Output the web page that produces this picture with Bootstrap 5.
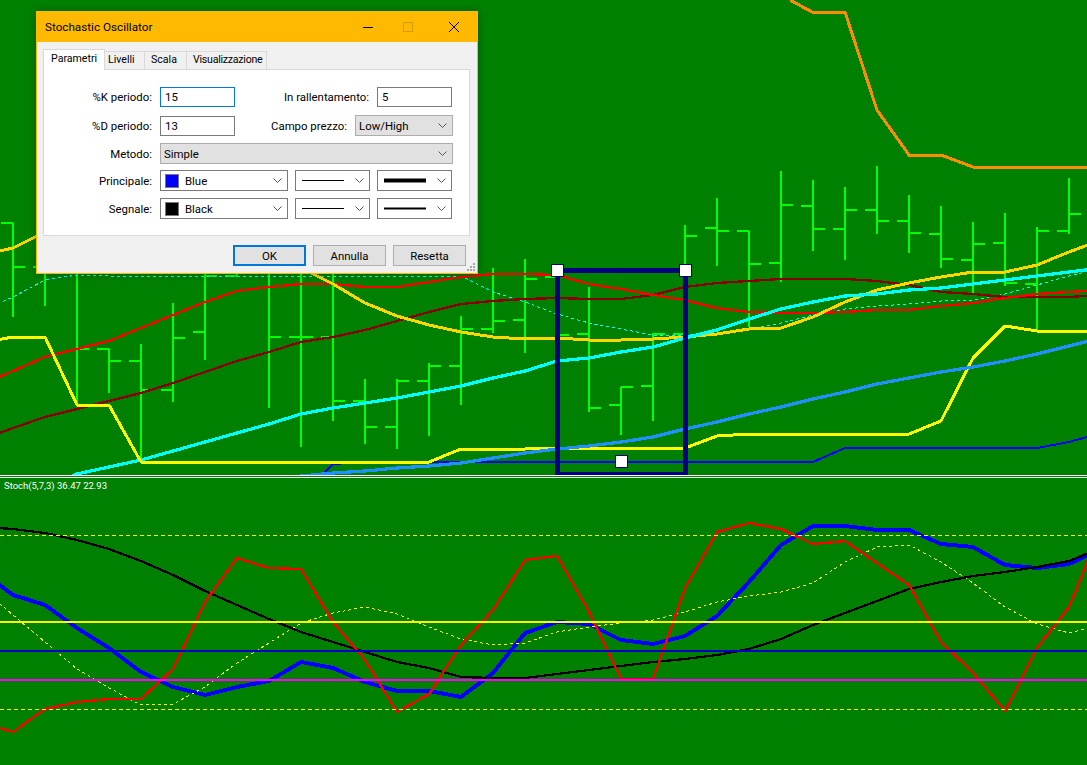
<!DOCTYPE html>
<html lang="en">
<head>
    <meta charset="UTF-8">
    <meta name="viewport" content="width=device-width, initial-scale=1">
    <title>Stochastic Oscillator</title>
    <link href="https://cdn.jsdelivr.net/npm/bootstrap@5.3.0/dist/css/bootstrap.min.css" rel="stylesheet">
    <style>
        body { background: #008000; overflow: hidden; font-family: Roboto, "Liberation Sans", sans-serif; }

        /* Chart windows */
        .chart-page { width: 1087px; height: 765px; }
        .chart-svg { display: block; background: #008000; }
        .chart-sep { height: 3px; background: #008000; border-top: 1px solid #fff; border-bottom: 1px solid #fff; }
        .sub-window { height: 287px; }
        .sub-label { left: 4px; top: 2px; color: #fff; font: 9.5px/12px Roboto, sans-serif; }

        /* Dialog */
        .dlg { left: 36px; top: 11px; width: 442px; height: 263px; background: #f0f0f0; border: 1px solid #ffb900; box-shadow: 0 0 8px rgba(0, 0, 0, .3); font-size: 11.4px; line-height: 16px; color: #000; }
        .dlg-title { height: 30px; background: #ffb900; padding-left: 8px; font-size: 11.7px; }
        .dlg-btns svg { display: block; }
        .win-min { margin-right: 30px; }
        .win-max { margin-right: 36px; }
        .win-close { margin-right: 18px; }
        .dlg-body { padding: 7px 7px 0 6px; }

        .dlg-tabs { height: 20px; flex-wrap: nowrap; font-size: 10.6px; }
        .dlg-tab { height: 18px; margin-top: 2px; padding-left: 6px; background: #f0f0f0; border: 1px solid #d9d9d9; border-bottom: 0; border-left: 0; color: #000; white-space: nowrap; }
        .dlg-tab-on { width: 62px; height: 21px; margin-top: 0; padding: 1px 0 0 7px; background: #fff; border-left: 1px solid #d9d9d9; position: relative; z-index: 2; }
        .tab-liv { width: 40px; padding-left: 3px; }
        .tab-sca { width: 42px; }
        .tab-vis { width: 80px; letter-spacing: -.25px; }
        .dlg-pane { height: 167px; width: 427px; background: #fff; border: 1px solid #d9d9d9; padding: 17px 0 0 0; }

        .fld-label { width: 108px; margin-right: 8px; text-align: right; }
        .fld-label-a { width: 134px; margin-right: 8px; text-align: right; }
        .fld-label-b { width: 112px; margin-right: 8px; text-align: right; }
        .fld { width: 75px; height: 20px; border: 1px solid #7a7a7a; border-radius: 0; padding: 0 0 0 4px; font-size: 11.4px; line-height: 16px; color: #000; background: #fff; min-height: 0; }
        .fld:focus { box-shadow: none; border-color: #7a7a7a; }
        .fld-on, .fld-on:focus { border-color: #0078d7; }

        .combo { height: 21px; border: 1px solid #7a7a7a; background: #fff; padding-left: 3px; padding-right: 5px; }
        .combo-gray { background: #e1e1e1; border-color: #adadad; }
        .combo-w98 { width: 98px; }
        .combo-w293 { width: 293px; }
        .combo-w128 { width: 128px; }
        .combo-w75 { width: 75px; padding-left: 6px; margin-left: 7px; }
        .swatch { width: 14px; height: 14px; border: 1px solid #7a7a7a; margin-right: 6px; margin-left: 1px; flex: none; }
        .swatch-blue { background: #0000ff; }
        .swatch-black { background: #000; }
        .row-gap-7 { margin-top: 7px; }
        .row-gap-6 { margin-top: 6px; }

        .dlg-foot { padding: 9px 4px 0 0; }
        .dlg-btn { width: 73px; height: 21px; padding: 0; margin-left: 7px; border: 1px solid #adadad; border-radius: 0; background: #e1e1e1; font-size: 11.4px; line-height: 16px; color: #000; }
        .dlg-btn-on { border: 2px solid #0078d7; }
        .grip { right: 1px; bottom: 1px; }
    </style>
</head>
<body>

<svg width="0" height="0" class="position-absolute">
    <symbol id="chev" viewBox="0 0 9 5"><path d="M.5.5 4.5 4.5 8.5.5" fill="none" stroke="#555" stroke-width="1"/></symbol>
</svg>

<div class="chart-page d-flex flex-column position-relative">
    <svg id="mainChart" class="chart-svg" width="1087" height="475" viewBox="0 0 1087 475" shape-rendering="crispEdges"></svg>
    <div class="chart-sep"></div>
    <div class="sub-window position-relative">
        <svg id="subChart" class="chart-svg" width="1087" height="287" viewBox="0 478 1087 287" shape-rendering="crispEdges"></svg>
        <span class="sub-label position-absolute">Stoch(5,7,3) 36.47 22.93</span>
    </div>

    <!-- Properties dialog -->
    <div class="dlg position-absolute">
        <div class="dlg-title d-flex align-items-center justify-content-between">
            <span>Stochastic Oscillator</span>
            <div class="dlg-btns d-flex align-items-center">
                <svg class="win-min" width="10" height="10" viewBox="0 0 10 10"><path d="M0 5.5h10" stroke="#000"/></svg>
                <svg class="win-max" width="10" height="10" viewBox="0 0 10 10"><rect x=".5" y=".5" width="9" height="9" fill="none" stroke="#d89c00"/></svg>
                <svg class="win-close" width="10" height="10" viewBox="0 0 10 10"><path d="M0 0 10 10M10 0 0 10" stroke="#000"/></svg>
            </div>
        </div>
        <div class="dlg-body">
            <ul class="nav dlg-tabs">
                <li class="nav-item"><span class="dlg-tab dlg-tab-on d-block">Parametri</span></li>
                <li class="nav-item"><span class="dlg-tab tab-liv d-block">Livelli</span></li>
                <li class="nav-item"><span class="dlg-tab tab-sca d-block">Scala</span></li>
                <li class="nav-item"><span class="dlg-tab tab-vis d-block">Visualizzazione</span></li>
            </ul>
            <div class="dlg-pane">
                <div class="d-flex align-items-center">
                    <label class="fld-label">%K periodo:</label>
                    <input class="form-control fld fld-on" type="text" value="15">
                    <label class="fld-label-a">In rallentamento:</label>
                    <input class="form-control fld" type="text" value="5">
                </div>
                <div class="d-flex align-items-center mt-2">
                    <label class="fld-label">%D periodo:</label>
                    <input class="form-control fld" type="text" value="13">
                    <label class="fld-label-b">Campo prezzo:</label>
                    <div class="combo combo-gray combo-w98 d-flex align-items-center justify-content-between">
                        <span>Low/High</span>
                        <svg width="9" height="5"><use href="#chev"/></svg>
                    </div>
                </div>
                <div class="d-flex align-items-center row-gap-7">
                    <label class="fld-label">Metodo:</label>
                    <div class="combo combo-gray combo-w293 d-flex align-items-center justify-content-between">
                        <span>Simple</span>
                        <svg width="9" height="5"><use href="#chev"/></svg>
                    </div>
                </div>
                <div class="d-flex align-items-center row-gap-6">
                    <label class="fld-label">Principale:</label>
                    <div class="combo combo-w128 d-flex align-items-center">
                        <span class="swatch swatch-blue"></span><span class="flex-grow-1">Blue</span>
                        <svg width="9" height="5"><use href="#chev"/></svg>
                    </div>
                    <div class="combo combo-w75 d-flex align-items-center justify-content-between">
                        <svg width="42" height="3"><path d="M0 1.5h42" stroke="#000"/></svg>
                        <svg width="9" height="5"><use href="#chev"/></svg>
                    </div>
                    <div class="combo combo-w75 d-flex align-items-center justify-content-between">
                        <svg width="42" height="5"><path d="M0 2.5h42" stroke="#000" stroke-width="4"/></svg>
                        <svg width="9" height="5"><use href="#chev"/></svg>
                    </div>
                </div>
                <div class="d-flex align-items-center row-gap-7">
                    <label class="fld-label">Segnale:</label>
                    <div class="combo combo-w128 d-flex align-items-center">
                        <span class="swatch swatch-black"></span><span class="flex-grow-1">Black</span>
                        <svg width="9" height="5"><use href="#chev"/></svg>
                    </div>
                    <div class="combo combo-w75 d-flex align-items-center justify-content-between">
                        <svg width="42" height="3"><path d="M0 1.5h42" stroke="#000"/></svg>
                        <svg width="9" height="5"><use href="#chev"/></svg>
                    </div>
                    <div class="combo combo-w75 d-flex align-items-center justify-content-between">
                        <svg width="42" height="3"><path d="M0 1.5h42" stroke="#000" stroke-width="2"/></svg>
                        <svg width="9" height="5"><use href="#chev"/></svg>
                    </div>
                </div>
            </div>
            <div class="dlg-foot d-flex justify-content-end">
                <button class="btn dlg-btn dlg-btn-on" type="button">OK</button>
                <button class="btn dlg-btn" type="button">Annulla</button>
                <button class="btn dlg-btn" type="button">Resetta</button>
            </div>
        </div>
        <svg class="grip position-absolute" width="10" height="10" viewBox="0 0 10 10" fill="#a8a8a8" shape-rendering="crispEdges">
            <rect x="7" y="1" width="2" height="2"/><rect x="4" y="4" width="2" height="2"/><rect x="7" y="4" width="2" height="2"/>
            <rect x="1" y="7" width="2" height="2"/><rect x="4" y="7" width="2" height="2"/><rect x="7" y="7" width="2" height="2"/>
        </svg>
    </div>
</div>

<script>
    const NS = "http://www.w3.org/2000/svg";
    const xAt = i => 13 + 32 * i;

    function add(svg, tag, attrs) {
        let el = document.createElementNS(NS, tag);
        for (let k in attrs) el.setAttribute(k, attrs[k]);
        svg.appendChild(el);
        return el;
    }

    // series are y values per bar, first one at i = -1 (just off the left edge)
    function line(svg, ys, color, width, dash) {
        let pts = ys.map((y, k) => xAt(k - 1) + "," + y).join(" ");
        let attrs = { points: pts, fill: "none", stroke: color, "stroke-width": width, "stroke-linejoin": "round" };
        if (dash) attrs["stroke-dasharray"] = dash;
        add(svg, "polyline", attrs);
    }

    function hline(svg, y, color, width, dash) {
        let attrs = { x1: 0, x2: 1087, y1: y, y2: y, stroke: color, "stroke-width": width };
        if (dash) attrs["stroke-dasharray"] = dash;
        add(svg, "line", attrs);
    }

    // [top, bottom, open tick, close tick]
    const bars = [
        [223,317,223,267],[250,306,267,262],[255,405,262,349],[349,393,349,361],[344,462,361,390],
        [303,402,390,338],[260,360,332,276],[250,277,276,262],[250,408,262,337],[250,447,337,337],
        [250,421,337,401],[379,444,401,427],[379,449,427,381],[363,436,381,366],[316,405,366,329],
        [268,333,329,321],[259,353,320,279],[275,345,277,335],[287,412,334,408],[387,435,405,387],
        [333,421,386,334],[225,338,334,236],[198,266,228,231],[231,327,231,264],[171,282,263,205],
        [180,251,206,229],[187,260,229,210],[166,234,210,221],[195,253,221,233],[206,268,234,259],
        [222,293,260,244],[213,286,243,283],[227,330,284,231],[178,234,231,214]
    ];

    const main = document.getElementById("mainChart");
    bars.forEach((b, i) => {
        let x = xAt(i);
        add(main, "path", {
            d: `M${x} ${b[0]}V${b[1]}M${x - 12} ${b[2]}H${x}M${x} ${b[3]}H${x + 12}`,
            stroke: "#00ff00", "stroke-width": 2, fill: "none"
        });
    });

    line(main, [311,297,280,275,276,277,276,276,276,276,276,276,276,276,276,276,292,302,314,323,329,335,335,333,329,323,315,309,306,304,301,300,294,285,276,268], "#00ffff", 1, "3 3");
    line(main, [440,428,417,409,401,393,383,372,361,352,342,337,330,321,312,304,301,299,298,299,299,295,287,283,281,279,279,279,281,285,292,294,297,297,297,295], "#8b0000", 2.3);
    line(main, [385,371,357,349,341,328,315,302,291,287,284,284,287,287,282,277,274,274,275,284,289,295,300,308,312,313,313,312,310,310,306,303,298,294,292,290], "#ff0000", 2.3);
    line(main, [255,248,232,220,215,215,218,225,235,250,268,284,303,316,325,332,337,339,338,340,340,339,337,334,329,328,317,302,290,283,277,272,272,265,252,240], "#ffd700", 3);
    line(main, [510,500,487,474,467,460,451,442,433,424,414,408,403,398,392,386,378,371,361,358,352,347,338,330,319,309,302,296,294,290,288,284,280,276,272,268], "#00ffff", 3.2);
    line(main, [496,496,496,496,496,496,496,496,496,496,496,464,462,462,462,462,462,462,462,462,462,462,462,462,462,462,462,448,448,448,448,448,448,448,442,433], "#0000ff", 2);
    line(main, [343,337,337,405,405,462,462,462,462,462,462,462,462,462,462,449,449,449,448,448,448,448,448,436,434,434,434,434,434,434,421,358,326,331,331,331], "#ffff00", 3);
    line(main, [500,500,500,500,500,500,500,500,500,500,476,473,471,468,466,463,458,453,449,446,442,437,429,422,414,407,399,392,384,378,372,367,361,354,346,338], "#1e90ff", 3.2);
    add(main, "polyline", { points: "790,0 812,12 845,12 877,110 909,155 941,155 973,167 1087,167", fill: "none", stroke: "#ff8c00", "stroke-width": 3 });

    // selected rectangle object
    add(main, "rect", { x: 557.5, y: 270.5, width: 128, height: 204, fill: "none", stroke: "#000080", "stroke-width": 5 });
    [[557.5, 270.5], [685.5, 270.5], [621.5, 461.5]].forEach(p => {
        add(main, "rect", { x: p[0] - 6, y: p[1] - 6, width: 12, height: 12, fill: "#fff", stroke: "#000080", "stroke-width": 1 });
    });

    const sub = document.getElementById("subChart");
    line(sub, [571,595,605,628,648,672,687,695,687,681,662,668,682,691,691,697,673,633,622,624,640,644,636,616,582,545,526,526,530,530,544,547,565,568,564,549], "#0000ff", 4);
    line(sub, [588,615,642,669,688,705,704,687,663,643,623,613,607,614,627,639,645,643,632,627,623,620,612,602,596,592,583,562,547,545,562,583,607,624,633,625], "#ffff00", 1, "3 3");
    line(sub, [527,529,533,540,549,561,575,591,605,619,632,642,652,662,668,677,678,678,674,670,666,662,659,655,649,639,625,613,601,589,582,576,572,567,561,548], "#000000", 2.3);
    line(sub, [722,732,709,702,699,699,669,602,558,568,569,622,660,712,694,645,610,560,556,612,679,679,588,532,523,529,544,541,563,585,642,673,711,648,607,529], "#ff0000", 2.3);
    hline(sub, 535.5, "#ffff00", 1, "4 3");
    hline(sub, 709.5, "#ffff00", 1, "4 3");
    hline(sub, 622, "#ffff00", 2);
    hline(sub, 651, "#0000cd", 2);
    hline(sub, 680, "#ff00ff", 2);
</script>
<script src="https://cdn.jsdelivr.net/npm/bootstrap@5.3.0/dist/js/bootstrap.bundle.min.js"></script>
</body>
</html>
